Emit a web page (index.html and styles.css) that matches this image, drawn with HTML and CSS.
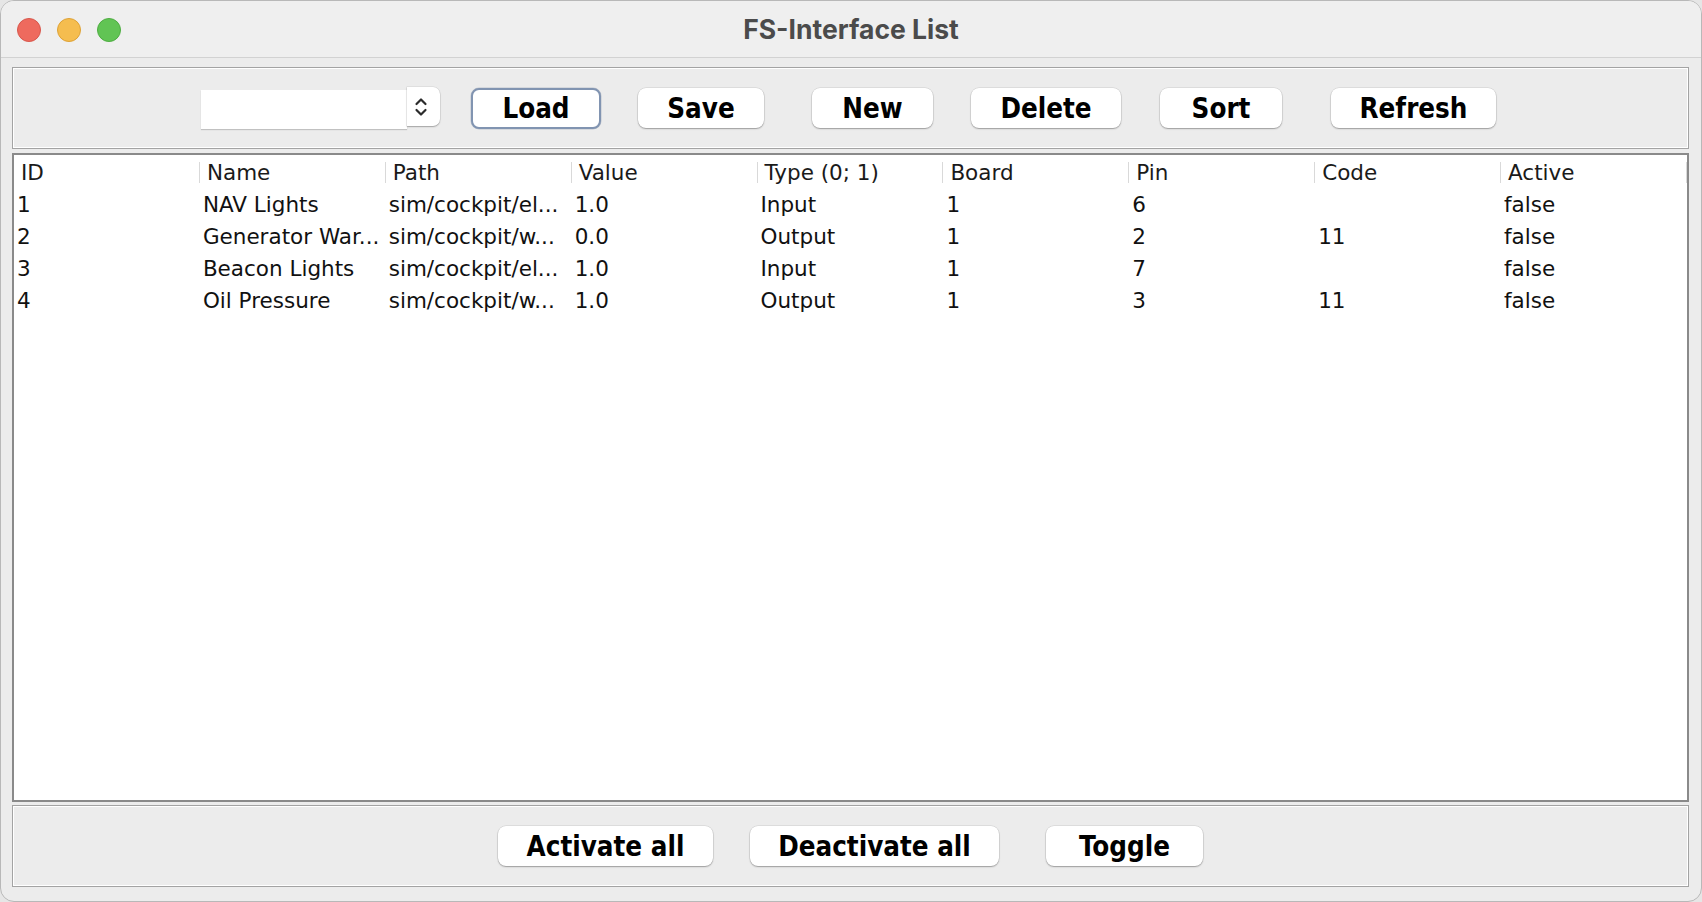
FILE: index.html
```html
<!DOCTYPE html>
<html>
<head>
<meta charset="utf-8">
<title>FS-Interface List</title>
<link rel="stylesheet" href="styles.css">
</head>
<body>
<div class="window">
  <div class="titlebar">
    <div class="lights">
      <span class="light red"></span>
      <span class="light yellow"></span>
      <span class="light green"></span>
    </div>
    <div class="title">FS-Interface List</div>
    <div class="spacer"></div>
  </div>
  <div class="content">
    <div class="panel toolbar">
      <div class="combo">
        <div class="combo-field"></div>
        <div class="combo-arrows">
          <svg width="14" height="22" viewBox="0 0 14 22"><polyline points="2.5,8 7,3.5 11.5,8" fill="none" stroke="#2b2b2b" stroke-width="2.2" stroke-linecap="round" stroke-linejoin="round"/><polyline points="2.5,14 7,18.5 11.5,14" fill="none" stroke="#2b2b2b" stroke-width="2.2" stroke-linecap="round" stroke-linejoin="round"/></svg>
        </div>
      </div>
      <button class="btn focused b-load">Load</button>
      <button class="btn b-save">Save</button>
      <button class="btn b-new">New</button>
      <button class="btn b-delete">Delete</button>
      <button class="btn b-sort">Sort</button>
      <button class="btn b-refresh">Refresh</button>
    </div>
    <div class="table-wrap">
      <table class="grid">
        <thead>
          <tr>
            <th><div class="hd">ID</div></th>
            <th><div class="hd">Name</div></th>
            <th><div class="hd">Path</div></th>
            <th><div class="hd">Value</div></th>
            <th><div class="hd">Type (0; 1)</div></th>
            <th><div class="hd">Board</div></th>
            <th><div class="hd">Pin</div></th>
            <th><div class="hd">Code</div></th>
            <th><div class="hd">Active</div></th>
          </tr>
        </thead>
        <tbody>
          <tr><td>1</td><td>NAV Lights</td><td>sim/cockpit/el...</td><td>1.0</td><td>Input</td><td>1</td><td>6</td><td></td><td>false</td></tr>
          <tr><td>2</td><td>Generator War...</td><td>sim/cockpit/w...</td><td>0.0</td><td>Output</td><td>1</td><td>2</td><td>11</td><td>false</td></tr>
          <tr><td>3</td><td>Beacon Lights</td><td>sim/cockpit/el...</td><td>1.0</td><td>Input</td><td>1</td><td>7</td><td></td><td>false</td></tr>
          <tr><td>4</td><td>Oil Pressure</td><td>sim/cockpit/w...</td><td>1.0</td><td>Output</td><td>1</td><td>3</td><td>11</td><td>false</td></tr>
        </tbody>
      </table>
    </div>
    <div class="panel bottombar">
      <button class="btn b-activate">Activate all</button>
      <button class="btn b-deactivate">Deactivate all</button>
      <button class="btn b-toggle">Toggle</button>
    </div>
  </div>
</div>
</body>
</html>
```
FILE: styles.css
```css
html, body {
  margin: 0;
  padding: 0;
  background: #e6e6e6;
}

.window {
  box-sizing: border-box;
  width: 1702px;
  height: 902px;
  border: 1px solid #b8b8b8;
  border-radius: 14px;
  background: #ececec;
  overflow: hidden;
  display: flex;
  flex-direction: column;
}

.titlebar {
  height: 56px;
  flex: none;
  background: #efefef;
  border-bottom: 1px solid #d2d2d2;
  display: grid;
  grid-template-columns: 1fr auto 1fr;
  align-items: center;
}

.lights {
  display: flex;
  gap: 16px;
  padding-left: 16px;
  padding-top: 1px;
}

.light {
  width: 24px;
  height: 24px;
  border-radius: 50%;
  box-sizing: border-box;
}

.red { background: #ee6a5e; border: 1px solid #d8574c; }
.yellow { background: #f5bd4f; border: 1px solid #dea236; }
.green { background: #61c454; border: 1px solid #4ead41; }

.title {
  font-family: Inter, "Liberation Sans", sans-serif;
  font-weight: 700;
  font-size: 26.5px;
  color: #4b4b4b;
  padding-bottom: 1px;
}

.content {
  flex: 1;
  display: flex;
  flex-direction: column;
  padding: 9px 12px 14px 11px;
  min-height: 0;
}

.panel {
  box-sizing: border-box;
  height: 82px;
  flex: none;
  border: 1px solid #a3a3a3;
  box-shadow: inset 1px 1px 0 #ffffff, inset -1px -1px 0 #ffffff;
  background: #ececec;
  display: flex;
  align-items: center;
  justify-content: center;
}

.toolbar {
  padding-right: 4px;
}

.bottombar {
  margin-top: 3px;
}

.combo {
  display: flex;
  align-items: flex-start;
  height: 42px;
}

.combo-field {
  width: 206px;
  height: 39px;
  margin-top: 3px;
  background: #ffffff;
  box-shadow: 0 1px 1px rgba(0, 0, 0, 0.18);
}

.combo-arrows {
  width: 33px;
  height: 39px;
  background: #ffffff;
  border-radius: 0 7px 7px 0;
  box-shadow: 0 1px 1.5px rgba(0, 0, 0, 0.28), 0 0 0 0.5px rgba(0, 0, 0, 0.1);
  display: flex;
  align-items: center;
  justify-content: center;
}

.combo-arrows svg {
  display: block;
  margin-left: -6px;
}

.btn {
  box-sizing: border-box;
  font-family: "DejaVu Sans Condensed", "DejaVu Sans", sans-serif;
  font-stretch: condensed;
  font-weight: 700;
  font-size: 27.5px;
  color: #000000;
  background: #ffffff;
  border: none;
  border-radius: 8px;
  height: 40px;
  padding: 0;
  margin: 0;
  line-height: 40px;
  text-align: center;
  box-shadow: 0 1px 1.5px rgba(0, 0, 0, 0.3), 0 0 0 0.5px rgba(0, 0, 0, 0.12);
}

.btn.focused {
  height: 41px;
  line-height: 37px;
  border: 2px solid #8194b1;
  box-shadow: 0 0 0 0.5px rgba(90, 110, 140, 0.3);
}

.b-load { width: 130px; margin-left: 31px; }
.b-save { width: 126px; margin-left: 37px; }
.b-new { width: 121px; margin-left: 48px; }
.b-delete { width: 150px; margin-left: 38px; }
.b-sort { width: 122px; margin-left: 39px; }
.b-refresh { width: 165px; margin-left: 49px; }

.b-activate { width: 215px; }
.b-deactivate { width: 249px; margin-left: 37px; }
.b-toggle { width: 157px; margin-left: 47px; }

.table-wrap {
  flex: 1;
  margin-top: 4px;
  border: 2px solid #8a8a8a;
  background: #ffffff;
  min-height: 0;
  overflow: hidden;
}

.grid {
  width: 100%;
  border-collapse: collapse;
  table-layout: fixed;
  font-family: "DejaVu Sans", sans-serif;
  font-size: 21.5px;
  color: #111111;
}

.grid th {
  padding: 7px 0 5px 0;
  font-weight: 400;
  text-align: left;
  height: 21px;
}

.grid th .hd {
  height: 21px;
  line-height: 21px;
  padding-left: 7px;
  border-right: 1px solid #d9d9d9;
  color: #1a1a1a;
  white-space: nowrap;
}

.grid td {
  box-sizing: border-box;
  height: 32px;
  padding: 0 0 0 3px;
  line-height: 31px;
  white-space: nowrap;
  overflow: hidden;
}

.grid thead tr {
  height: 33px;
}
```
